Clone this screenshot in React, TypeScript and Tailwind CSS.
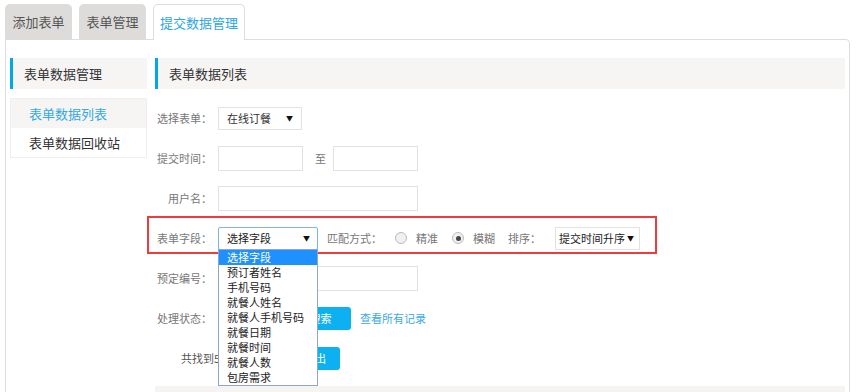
import React from 'react';

const font = { fontFamily: '"Noto Sans CJK SC", "Noto Sans", sans-serif' };

const fieldOptions = ['选择字段', '预订者姓名', '手机号码', '就餐人姓名', '就餐人手机号码', '就餐日期', '就餐时间', '就餐人数', '包房需求'];

const Label = ({ children }: { children: React.ReactNode }) => (
  <span className="w-[57px] shrink-0 text-right text-[11px] text-[#777]">{children}</span>
);

const Input = ({ w }: { w: string }) => <div className={`${w} h-[25px] border border-[#e2e2e2] bg-white`} />;

const Arrow = () => <span className="text-[7px] text-[#111]">▼</span>;

const Radio = ({ checked }: { checked?: boolean }) => (
  <span className="w-[12px] h-[12px] rounded-full border border-[#bbb] bg-[#f0f0f0] flex items-center justify-center">
    {checked && <span className="w-[5px] h-[5px] rounded-full bg-[#444]" />}
  </span>
);

export default function App() {
  return (
    <div className="w-[860px] h-[392px] overflow-hidden bg-white" style={font}>
      {/* tabs */}
      <div className="flex items-end gap-[7px] pl-[5px] pt-[4px]">
        <div className="w-[67px] h-[35px] rounded-t-[5px] bg-[#dedcda] flex items-center justify-center text-[13px] text-[#555]">添加表单</div>
        <div className="w-[67px] h-[35px] rounded-t-[5px] bg-[#dedcda] flex items-center justify-center text-[13px] text-[#555]">表单管理</div>
        <div className="relative z-10 -mb-px w-[92px] h-[36px] rounded-t-[5px] border border-b-0 border-[#ddd] bg-white flex items-center justify-center text-[13px] text-[#2ea7e0]">提交数据管理</div>
      </div>

      {/* panel */}
      <div className="ml-[5px] w-[845px] h-[360px] border border-[#ddd] rounded-tr-[4px] pt-[18px] pl-[4px] flex gap-[8px]">
        {/* sidebar */}
        <div className="w-[137px] shrink-0">
          <div className="h-[31px] bg-[#f6f5f3] border-l-[3px] border-[#00a8e8] flex items-center pl-[11px] text-[13px] text-[#333]">表单数据管理</div>
          <div className="mt-[9px] border border-[#f0efed]">
            <div className="h-[29px] bg-[#f6f5f3] flex items-center pl-[18px] text-[13px] text-[#33a8e6]">表单数据列表</div>
            <div className="h-[29px] flex items-center pl-[18px] text-[13px] text-[#333]">表单数据回收站</div>
          </div>
        </div>

        {/* main */}
        <div className="w-[690px] shrink-0">
          <div className="h-[31px] bg-[#f6f5f3] border-l-[3px] border-[#00a8e8] flex items-center pl-[11px] text-[13px] text-[#333]">表单数据列表</div>

          <div className="mt-[9px]">
            <div className="h-[40px] flex items-center">
              <Label>选择表单：</Label>
              <div className="ml-[6px] w-[84px] h-[23px] border border-[#e2e2e2] flex items-center justify-between pl-[8px] pr-[8px] text-[11px] text-[#333]">
                在线订餐<Arrow />
              </div>
            </div>

            <div className="h-[40px] flex items-center">
              <Label>提交时间：</Label>
              <div className="ml-[6px]"><Input w="w-[85px]" /></div>
              <span className="ml-[12px] text-[11px] text-[#777]">至</span>
              <div className="ml-[7px]"><Input w="w-[85px]" /></div>
            </div>

            <div className="h-[40px] flex items-center">
              <Label>用户名：</Label>
              <div className="ml-[6px]"><Input w="w-[200px]" /></div>
            </div>

            <div className="relative h-[40px] flex items-center">
              <div className="absolute left-[-8px] top-[-2px] w-[510px] h-[38px] border-2 border-[#ee3b3b] pointer-events-none" />
              <Label>表单字段：</Label>
              <div className="relative ml-[6px]">
                <div className="w-[100px] h-[23px] rounded-[2px] border border-[#7eb4ea] flex items-center justify-between pl-[8px] pr-[7px] text-[11px] text-[#222]">
                  选择字段<Arrow />
                </div>
                <div className="absolute z-20 left-0 top-[22px] w-[100px] border border-[#8fa6c9] bg-white">
                  {fieldOptions.map((o, i) => (
                    <div key={o} className={`h-[15px] leading-[15px] pl-[8px] text-[11px] ${i === 0 ? 'bg-[#1e90ff] text-white' : 'text-[#222]'}`}>{o}</div>
                  ))}
                </div>
              </div>
              <span className="ml-[9px] text-[11px] text-[#777]">匹配方式：</span>
              <span className="ml-[13px]"><Radio /></span>
              <span className="ml-[9px] text-[11px] text-[#777]">精准</span>
              <span className="ml-[14px]"><Radio checked /></span>
              <span className="ml-[9px] text-[11px] text-[#777]">模糊</span>
              <span className="ml-[13px] text-[11px] text-[#777]">排序：</span>
              <div className="ml-[14px] w-[85px] h-[23px] border border-[#e2e2e2] flex items-center justify-between pl-[3px] pr-[5px] text-[11px] text-[#222]">
                提交时间升序<Arrow />
              </div>
            </div>

            <div className="h-[40px] flex items-center">
              <Label>预定编号：</Label>
              <div className="ml-[6px]"><Input w="w-[200px]" /></div>
            </div>

            <div className="h-[40px] flex items-center">
              <Label>处理状态：</Label>
              <div className="ml-[6px] w-[66px] h-[23px] border border-[#e2e2e2] flex items-center justify-between pl-[6px] pr-[4px] text-[11px] text-[#333]">
                全部<Arrow />
              </div>
              <button className="ml-[6px] w-[61px] h-[23px] rounded-[3px] bg-[#0db1f2] text-white text-[11px]">搜索</button>
              <span className="ml-[9px] text-[11px] text-[#3aa9e8]">查看所有记录</span>
            </div>

            <div className="h-[40px] flex items-center">
              <span className="pl-[26px] text-[11px] text-[#555]">共找到5条记录</span>
              <button className="ml-[37px] w-[50px] h-[23px] rounded-[3px] bg-[#0db1f2] text-white text-[11px]">导出</button>
            </div>

            <div className="mt-[8px] h-[30px] bg-[#f5f4f2]" />
          </div>
        </div>
      </div>
    </div>
  );
}
